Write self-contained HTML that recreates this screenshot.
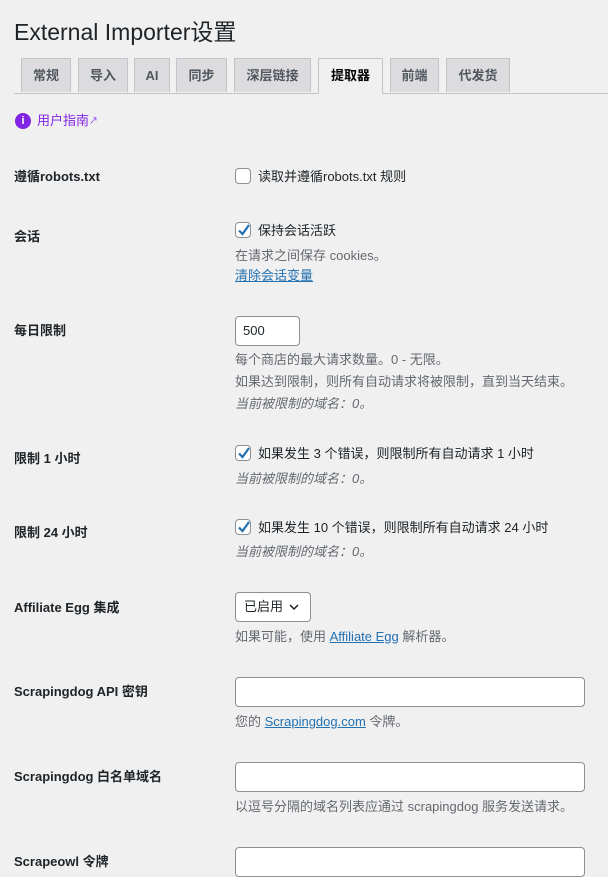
<!DOCTYPE html>
<html><head><meta charset="utf-8"><style>
body{margin:0;background:#f0f0f1;width:608px;height:869px;overflow:hidden;position:relative;font-family:"Liberation Sans","Noto Sans CJK SC",sans-serif;font-size:13px;color:#1d2327}
.a{position:absolute;white-space:nowrap;line-height:18px}
h1{position:absolute;left:14px;top:17px;margin:0;font-weight:400;font-size:23px;line-height:30px;color:#1d2327}
.tab{position:absolute;top:58px;height:34px;border:1px solid #c3c4c7;border-bottom:none;background:#dcdcde;font-weight:600;font-size:13px;color:#50575e;text-align:center;line-height:34px;box-sizing:border-box}
.tab.on{background:#f0f0f1;color:#000;height:36px}
.line{position:absolute;left:14px;right:0;top:93px;border-top:1px solid #c3c4c7}
.lab{font-weight:600;font-size:13px}
.d{color:#646970;font-size:13px}
.i{font-style:italic}
.cb{position:absolute;width:14px;height:14px;border:1px solid #8c8f94;border-radius:4px;background:#fff}
.cb svg{position:absolute;left:-1px;top:-2px}
.in{position:absolute;background:#fff;border:1px solid #8c8f94;border-radius:4px;box-sizing:border-box}
a{color:#2271b1;text-decoration:underline}
</style></head><body>
<h1>External Importer设置</h1>
<div class="tab" style="left:21px;width:50px">常规</div>
<div class="tab" style="left:78px;width:50px">导入</div>
<div class="tab" style="left:134px;width:36px">AI</div>
<div class="tab" style="left:176px;width:51px">同步</div>
<div class="tab" style="left:234px;width:77px">深层链接</div>
<div class="tab on" style="left:318px;width:65px">提取器</div>
<div class="tab" style="left:390px;width:49px">前端</div>
<div class="tab" style="left:446px;width:64px">代发货</div>
<div class="line"></div>
<div class="tab on" style="left:319px;width:63px;top:90px;height:5px;border:none"></div>

<div class="a" style="left:15px;top:113px;width:16px;height:16px;border-radius:50%;background:#8224e3;color:#fff;font-size:11px;font-weight:700;text-align:center;line-height:16px">i</div>
<div class="a" style="left:37px;top:112px;color:#8224e3">用户指南<span style="font-size:9px;vertical-align:top">↗</span></div>

<div class="a lab" style="left:14px;top:168px">遵循robots.txt</div>
<div class="cb" style="left:235px;top:168px"></div>
<div class="a" style="left:258px;top:168px">读取并遵循robots.txt 规则</div>

<div class="a lab" style="left:14px;top:228px">会话</div>
<div class="cb" style="left:235px;top:222px"><svg width="18" height="18" viewBox="0 0 18 18"><path d="M4 9.5l3.5 3.5L14 4" stroke="#2271b1" stroke-width="2.2" fill="none"/></svg></div>
<div class="a" style="left:258px;top:222px">保持会话活跃</div>
<div class="a d" style="left:235px;top:247px">在请求之间保存 cookies。</div>
<div class="a" style="left:235px;top:267px"><a>清除会话变量</a></div>

<div class="a lab" style="left:14px;top:322px">每日限制</div>
<div class="in" style="left:235px;top:316px;width:65px;height:30px;padding:6px 7px;line-height:16px">500</div>
<div class="a d" style="left:235px;top:351px">每个商店的最大请求数量。0 - 无限。</div>
<div class="a d" style="left:235px;top:373px">如果达到限制，则所有自动请求将被限制，直到当天结束。</div>
<div class="a d i" style="left:235px;top:395px">当前被限制的域名：0。</div>

<div class="a lab" style="left:14px;top:450px">限制 1 小时</div>
<div class="cb" style="left:235px;top:445px"><svg width="18" height="18" viewBox="0 0 18 18"><path d="M4 9.5l3.5 3.5L14 4" stroke="#2271b1" stroke-width="2.2" fill="none"/></svg></div>
<div class="a" style="left:258px;top:445px">如果发生 3 个错误，则限制所有自动请求 1 小时</div>
<div class="a d i" style="left:235px;top:470px">当前被限制的域名：0。</div>

<div class="a lab" style="left:14px;top:524px">限制 24 小时</div>
<div class="cb" style="left:235px;top:519px"><svg width="18" height="18" viewBox="0 0 18 18"><path d="M4 9.5l3.5 3.5L14 4" stroke="#2271b1" stroke-width="2.2" fill="none"/></svg></div>
<div class="a" style="left:258px;top:519px">如果发生 10 个错误，则限制所有自动请求 24 小时</div>
<div class="a d i" style="left:235px;top:543px">当前被限制的域名：0。</div>

<div class="a lab" style="left:14px;top:599px">Affiliate Egg 集成</div>
<div class="in" style="left:235px;top:592px;width:76px;height:30px;padding:6px 8px;line-height:16px;font-size:13px">已启用 <svg width="10" height="8" viewBox="0 0 10 8" style="margin-left:2px"><path d="M1 2l4 4 4-4" stroke="#1d2327" stroke-width="1.5" fill="none"/></svg></div>
<div class="a d" style="left:235px;top:628px">如果可能，使用 <a>Affiliate Egg</a> 解析器。</div>

<div class="a lab" style="left:14px;top:683px">Scrapingdog API 密钥</div>
<div class="in" style="left:235px;top:677px;width:350px;height:30px"></div>
<div class="a d" style="left:235px;top:713px">您的 <a>Scrapingdog.com</a> 令牌。</div>

<div class="a lab" style="left:14px;top:768px">Scrapingdog 白名单域名</div>
<div class="in" style="left:235px;top:762px;width:350px;height:30px"></div>
<div class="a d" style="left:235px;top:798px">以逗号分隔的域名列表应通过 scrapingdog 服务发送请求。</div>

<div class="a lab" style="left:14px;top:853px">Scrapeowl 令牌</div>
<div class="in" style="left:235px;top:847px;width:350px;height:30px"></div>
</body></html>
